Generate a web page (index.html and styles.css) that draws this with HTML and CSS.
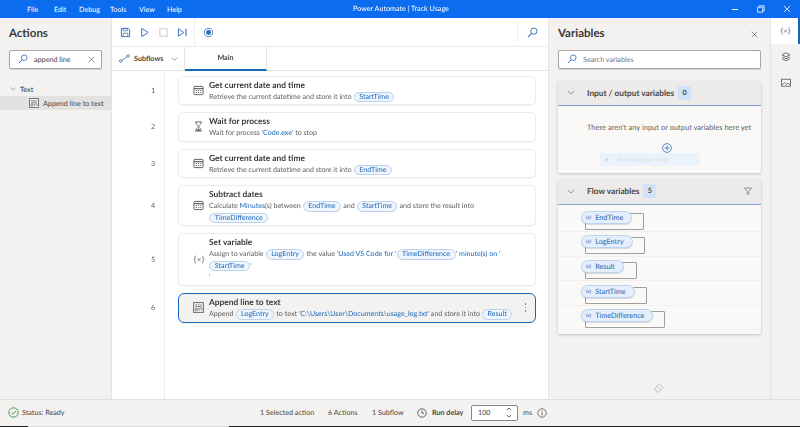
FILE: index.html
```html
<!DOCTYPE html>
<html lang="en">
<head>
<meta charset="utf-8">
<title>Power Automate | Track Usage</title>
<link rel="stylesheet" href="styles.css">
</head>
<body>
<svg class="defs" width="0" height="0">
  <defs>
    <symbol id="i-search" viewBox="0 0 12 12"><circle cx="7.5" cy="4.5" r="3.4" fill="none" stroke="currentColor"/><path d="M5 7 1 11" stroke="currentColor" stroke-width="1.1"/></symbol>
    <symbol id="i-close" viewBox="0 0 10 10"><path d="M1 1l8 8M9 1 1 9" stroke="currentColor" stroke-width=".9"/></symbol>
    <symbol id="i-chev" viewBox="0 0 10 6"><path d="M.8.8 5 5 9.2.8" fill="none" stroke="currentColor" stroke-width=".9"/></symbol>
    <symbol id="i-cal" viewBox="0 0 12 12"><rect x="1" y="1.5" width="10" height="9" rx="1" fill="none" stroke="currentColor"/><path d="M1 4h10" stroke="currentColor" stroke-width="1.2"/><path d="M3 6h1.4M5.4 6h1.4M7.8 6h1.4M3 8.2h1.4M5.4 8.2h1.4M7.8 8.2h1.4" stroke="currentColor" stroke-width=".9"/></symbol>
    <symbol id="i-text" viewBox="0 0 12 12"><rect x=".7" y=".7" width="10.6" height="10.6" fill="#eee" stroke="currentColor" stroke-width=".9"/><path d="M2.5 3.2h2M5.5 3.2h1.5M8 3.2h1.5M2.5 5h7" stroke="currentColor" stroke-width=".8"/><path d="M2.5 7h2.2v2.4h-2.2zM5.6 7h1.2v2.4M7.8 7h1.8v2.4" fill="none" stroke="currentColor" stroke-width=".7"/></symbol>
    <symbol id="i-x" viewBox="0 0 14 10"><path d="M3.5.8C2 .8 2.4 1.6 2.4 3.4 2.4 4.5 1.6 5 1 5c.6 0 1.4.5 1.4 1.6 0 1.8-.4 2.6 1.1 2.6M10.5.8c1.5 0 1.1.8 1.1 2.6 0 1.1.8 1.6 1.4 1.6-.6 0-1.4.5-1.4 1.6 0 1.8.4 2.6-1.1 2.6" fill="none" stroke="currentColor" stroke-width=".8"/><path d="M5.2 3.4 8.8 7M8.8 3.4 5.2 7" stroke="currentColor" stroke-width=".8"/></symbol>
  </defs>
</svg>

<div class="app">
  <header class="titlebar">
    <nav class="menu">
      <span class="m-file">File</span><span class="m-edit">Edit</span><span class="m-debug">Debug</span><span class="m-tools">Tools</span><span class="m-view">View</span><span class="m-help">Help</span>
    </nav>
    <div class="apptitle">Power Automate | Track Usage</div>
    <div class="winbtns">
      <svg width="8" height="8" viewBox="0 0 8 8"><path d="M1 4.5h6" stroke="#fff"/></svg>
      <svg width="8" height="8" viewBox="0 0 8 8"><path d="M.7 2.2h5v5h-5zM2.2 2V.8h5v5H5.900" fill="none" stroke="#fff" stroke-width=".8"/></svg>
      <svg width="8" height="8" viewBox="0 0 10 10"><path d="M1 1l8 8M9 1 1 9" stroke="#fff"/></svg>
    </div>
  </header>

  <div class="main">
    <aside class="actions">
      <h2 class="panel-title">Actions</h2>
      <div class="search search-actions">
        <svg class="s-ico"><use href="#i-search"/></svg>
        <span class="s-text">append line</span>
        <svg class="s-x"><use href="#i-close"/></svg>
      </div>
      <div class="tree-head"><svg class="tree-chev"><use href="#i-chev"/></svg><span>Text</span></div>
      <div class="tree-item"><svg class="tree-ico"><use href="#i-text"/></svg><span>Append line to text</span></div>
    </aside>

    <section class="center">
      <div class="toolbar">
        <div class="tool-group">
          <svg class="tool" viewBox="0 0 12 12"><path d="M1.500 1.500h7.500l1.500 1.500v7.500h-9z" fill="none" stroke="#2f6fb5"/><path d="M3.500 1.700h4.500v2.500h-4.500zM3.500 10.300v-3.500h5v3.500" fill="none" stroke="#2f6fb5" stroke-width=".8"/></svg>
          <svg class="tool" viewBox="0 0 12 12"><path d="M3 1.500v9l7-4.500z" fill="none" stroke="#2f6fb5"/></svg>
          <svg class="tool" viewBox="0 0 12 12"><rect x="2" y="2" width="8" height="8" fill="none" stroke="#c8c6c4"/></svg>
          <svg class="tool" viewBox="0 0 12 12"><path d="M1.500 2v8l6-4z" fill="none" stroke="#2f6fb5"/><path d="M9.800 2v8" stroke="#2f6fb5" stroke-width="1.200"/></svg>
        </div>
        <div class="tool-group rec">
          <svg class="tool" viewBox="0 0 12 12"><circle cx="6" cy="6" r="4.600" fill="none" stroke="#2f6fb5" stroke-width=".9"/><circle cx="6" cy="6" r="2.700" fill="#2f6fb5"/></svg>
        </div>
        <div class="tool-end"><svg class="tool-search"><use href="#i-search"/></svg></div>
      </div>

      <div class="tabs">
        <div class="subflows">
          <svg width="11" height="9" viewBox="0 0 11 9"><circle cx="1.800" cy="7" r="1.300" fill="none" stroke="#2f6fb5" stroke-width=".8"/><circle cx="9.200" cy="2" r="1.300" fill="none" stroke="#2f6fb5" stroke-width=".8"/><path d="M3 6.300 8 2.700" stroke="#2f6fb5" stroke-width=".8"/></svg>
          <span>Subflows</span>
          <svg class="sub-chev"><use href="#i-chev"/></svg>
        </div>
        <div class="tab-main">Main</div>
      </div>

      <div class="flow">
        <div class="gutter"></div>
        <ol class="steps">
          <li class="step h1"><span class="num">1</span><div class="card">
            <svg class="c-ico"><use href="#i-cal"/></svg>
            <div class="c-body"><div class="c-title">Get current date and time</div><div class="c-desc">Retrieve the current datetime and store it into <span class="pill">StartTime</span></div></div>
          </div></li>
          <li class="step h1"><span class="num">2</span><div class="card">
            <svg class="c-ico" viewBox="0 0 12 12"><path d="M2.500 1h7M2.500 11h7M3.300 1v1.500c0 1.800 2.700 2.200 2.700 3.500s-2.700 1.700-2.700 3.500v1.500M8.700 1v1.500c0 1.800-2.700 2.200-2.700 3.500s2.700 1.700 2.700 3.500v1.500" fill="none" stroke="#555" stroke-width=".9"/><path d="M3.800 10.500 6 8l2.200 2.500z" fill="#555"/></svg>
            <div class="c-body"><div class="c-title">Wait for process</div><div class="c-desc">Wait for process <span class="lit">'Code.exe'</span> to stop</div></div>
          </div></li>
          <li class="step h1"><span class="num">3</span><div class="card">
            <svg class="c-ico"><use href="#i-cal"/></svg>
            <div class="c-body"><div class="c-title">Get current date and time</div><div class="c-desc">Retrieve the current datetime and store it into <span class="pill">EndTime</span></div></div>
          </div></li>
          <li class="step h2"><span class="num">4</span><div class="card">
            <svg class="c-ico"><use href="#i-cal"/></svg>
            <div class="c-body"><div class="c-title">Subtract dates</div><div class="c-desc">Calculate <span class="lit">Minutes</span>(s) between <span class="pill">EndTime</span> and <span class="pill">StartTime</span> and store the result into<br><span class="pill">TimeDifference</span></div></div>
          </div></li>
          <li class="step h3"><span class="num">5</span><div class="card">
            <svg class="c-ico c-ico-x"><use href="#i-x"/></svg>
            <div class="c-body"><div class="c-title">Set variable</div><div class="c-desc">Assign to variable <span class="pill">LogEntry</span> the value <span class="lit">'Used VS Code for '</span><span class="pill">TimeDifference</span><span class="lit">' minute(s) on '</span><br><span class="pill">StartTime</span><span class="lit">'</span><br><span class="lit">'</span></div></div>
          </div></li>
          <li class="step h1"><span class="num">6</span><div class="card selected">
            <svg class="c-ico"><use href="#i-text"/></svg>
            <div class="c-body"><div class="c-title">Append line to text</div><div class="c-desc">Append <span class="pill">LogEntry</span> to text <span class="lit">'C:\Users\User\Documents\usage_log.txt'</span> and store it into <span class="pill">Result</span></div></div>
            <div class="kebab"><i></i><i></i><i></i></div>
          </div></li>
        </ol>
      </div>
    </section>

    <aside class="variables">
      <div class="var-head">
        <h2 class="panel-title">Variables</h2>
        <svg class="var-close"><use href="#i-close"/></svg>
      </div>
      <div class="search search-vars">
        <svg class="s-ico"><use href="#i-search"/></svg>
        <span class="s-place">Search variables</span>
      </div>

      <div class="vcard">
        <div class="vcard-head">
          <svg class="v-chev"><use href="#i-chev"/></svg>
          <span class="v-name">Input / output variables</span><span class="badge">0</span>
        </div>
        <div class="vcard-empty">
          <p>There aren't any input or output variables here yet</p>
          <svg class="plus" width="10" height="10" viewBox="0 0 10 10"><circle cx="5" cy="5" r="4.400" fill="none" stroke="#2f6fb5" stroke-width=".8"/><path d="M5 2.600v4.800M2.600 5h4.800" stroke="#2f6fb5" stroke-width=".8"/></svg>
          <div class="snip"><i></i><span>Rectangular Snip</span></div>
        </div>
      </div>

      <div class="vcard">
        <div class="vcard-head">
          <svg class="v-chev"><use href="#i-chev"/></svg>
          <span class="v-name">Flow variables</span><span class="badge">5</span>
          <svg class="filter" width="8" height="8" viewBox="0 0 8 8"><path d="M.5 1h7L4.800 4.300v3L3.200 6.500V4.300z" fill="none" stroke="#555" stroke-width=".6"/></svg>
        </div>
        <div class="var-list">
          <div class="var-row"><div class="vpill w1"><span class="vx">(x)</span>EndTime</div></div>
          <div class="var-row"><div class="vpill w2"><span class="vx">(x)</span>LogEntry</div></div>
          <div class="var-row"><div class="vpill w3"><span class="vx">(x)</span>Result</div></div>
          <div class="var-row"><div class="vpill w4"><span class="vx">(x)</span>StartTime</div></div>
          <div class="var-row"><div class="vpill w5"><span class="vx">(x)</span>TimeDifference</div></div>
        </div>
      </div>

      <div class="eraser">
        <svg width="10" height="10" viewBox="0 0 10 10"><path d="M.8 5.500 5.500.8 9.200 4.500 4.500 9.200H3.300z" fill="none" stroke="#b5b3b1" stroke-width=".8"/><path d="M3 3.300 6.800 7" stroke="#b5b3b1" stroke-width=".7"/></svg>
      </div>
    </aside>

    <nav class="rail">
      <div class="rail-item active"><svg class="rail-x"><use href="#i-x"/></svg></div>
      <div class="rail-item"><svg width="10" height="10" viewBox="0 0 10 10"><path d="M5 .8 9 2.800 5 4.800 1 2.800zM1 4.800 5 6.800 9 4.800M1 6.800 5 8.800 9 6.800" fill="none" stroke="#555" stroke-width=".8"/></svg></div>
      <div class="rail-item"><svg width="10" height="10" viewBox="0 0 10 10"><rect x=".6" y="1.200" width="8.800" height="7" fill="none" stroke="#555" stroke-width=".8"/><path d="M1 7 3.500 4.500 5.800 7M5.800 6 7 5l2 2" fill="none" stroke="#555" stroke-width=".7"/></svg></div>
    </nav>
  </div>

  <footer class="status">
    <div class="st-left">
      <svg width="11" height="11" viewBox="0 0 11 11"><circle cx="5.500" cy="5.500" r="4.700" fill="none" stroke="#4a9a4a"/><path d="M3.200 5.600 4.900 7.200 7.900 4" fill="none" stroke="#4a9a4a" stroke-width=".9"/></svg>
      <span>Status: Ready</span>
    </div>
    <div class="st-mid">
      <span class="st-sel">1 Selected action</span>
      <span class="st-act">6 Actions</span>
      <span class="st-sub">1 Subflow</span>
      <svg class="st-clock" width="10" height="10" viewBox="0 0 10 10"><circle cx="5" cy="5" r="4.200" fill="none" stroke="#444" stroke-width=".8"/><path d="M5 2.500V5.200H7" fill="none" stroke="#444" stroke-width=".8"/></svg>
      <b class="st-delay">Run delay</b>
      <div class="delay-box"><span>100</span><svg width="6" height="11" viewBox="0 0 6 11"><path d="M.8 3 3 1 5.200 3M.8 8 3 10 5.200 8" fill="none" stroke="#444" stroke-width=".8"/></svg></div>
      <span class="st-ms">ms</span>
      <svg width="10" height="10" viewBox="0 0 10 10"><circle cx="5" cy="5" r="4.200" fill="none" stroke="#444" stroke-width=".7"/><path d="M5 4.300v3M5 2.500v1" stroke="#444" stroke-width=".8"/></svg>
    </div>
  </footer>
  <div class="taskbar"><i class="tb-a"></i><i class="tb-b"></i><i class="tb-c"></i></div>
</div>
</body>
</html>
```
FILE: styles.css
```css
* { box-sizing: border-box; }
html, body { margin: 0; padding: 0; }
body { width: 800px; height: 427px; overflow: hidden; font-family: Lato, "Open Sans", sans-serif; color: #323130; background: #f3f2f1; font-size: 7px; text-rendering: geometricPrecision; }
.defs { position: absolute; }
.app { display: flex; flex-direction: column; height: 427px; filter: blur(0.25px); }

.titlebar { height: 18px; flex: none; background: #0b6cf0; color: #fff; display: flex; align-items: center; position: relative; font-size: 7.200px; }
.menu { display: flex; padding-left: 27px; }
.m-file { width: 27px; } .m-edit { width: 25px; } .m-debug { width: 31px; } .m-tools { width: 29px; } .m-view { width: 28px; }
.apptitle { position: absolute; left: 353px; top: 0; line-height: 18px; white-space: nowrap; }
.winbtns { margin-left: auto; display: flex; gap: 18px; padding-right: 9px; align-items: center; }

.main { flex: 1; display: flex; min-height: 0; }

.actions { width: 112px; flex: none; background: #f3f2f1; padding-top: 8px; border-right: 1px solid #e6e4e2; }
.panel-title { margin: 0 0 0 9px; font-size: 11.500px; line-height: 16px; font-weight: 700; color: #3b3a39; }
.search { height: 18.500px; background: #fff; border: 1px solid #a9a7a5; border-radius: 2px; display: flex; align-items: center; box-shadow: 0 1px 1px #0002; }
.search-actions { width: 93px; margin: 8px 0 0 9px; }
.s-ico { width: 10px; height: 10px; color: #2f6fb5; margin-left: 8px; flex: none; }
.s-text { margin-left: 6px; font-size: 7.200px; color: #484644; }
.s-x { width: 7px; height: 7px; color: #555; margin-left: auto; margin-right: 6px; }
.s-place { margin-left: 6px; font-size: 7.200px; color: #77757a; }
.tree-head { display: flex; align-items: center; height: 14px; margin-top: 13.500px; padding-left: 10px; font-size: 7.200px; }
.tree-chev { width: 6px; height: 4px; color: #666; margin-right: 4px; }
.tree-item { display: flex; align-items: center; height: 14px; padding-left: 29px; background: #e4e2e0; font-size: 7.200px; color: #484644; }
.tree-ico { width: 10px; height: 10px; color: #555; margin-right: 4px; }

.center { width: 436px; flex: none; background: #fff; display: flex; flex-direction: column; min-height: 0; }
.toolbar { height: 29px; flex: none; display: flex; align-items: center; border-bottom: 1px solid #edebe9; padding-left: 8px; }
.tool-group { display: flex; gap: 8px; height: 100%; align-items: center; padding: 0 6px 0 0; border-right: 1px solid #f0efee; }
.tool { width: 11px; height: 11px; flex: none; }
.rec { border-right: 0; padding-left: 8px; }
.tool-end { margin-left: auto; margin-right: 10px; border-left: 1px solid #edebe9; height: 18px; padding-left: 9px; display: flex; align-items: center; }
.tool-search { width: 11px; height: 11px; color: #2f6fb5; }

.tabs { height: 24px; flex: none; display: flex; border-bottom: 1px solid #e6e4e2; }
.subflows { width: 73px; display: flex; align-items: center; padding-left: 7px; gap: 4px; font-size: 7.200px; font-weight: 700; color: #484644; border-right: 1px solid #e6e4e2; }
.sub-chev { width: 7px; height: 4px; color: #555; margin-left: 4px; }
.tab-main { width: 82px; text-align: center; line-height: 22px; font-size: 7.200px; font-weight: 700; color: #484644; border-bottom: 2px solid #1668b8; border-right: 1px solid #e6e4e2; height: 24px; }

.flow { flex: 1; display: flex; min-height: 0; position: relative; }
.gutter { position: absolute; left: 52px; top: 0; bottom: 0; border-left: 1px solid #edebe9; }
.steps { list-style: none; margin: 0; padding: 4.500px 0 0 0; width: 100%; display: flex; flex-direction: column; gap: 7px; }
.step { display: flex; align-items: center; }
.h1 { height: 29.500px; } .h2 { height: 41px; } .h3 { height: 53px; }
.num { width: 66px; flex: none; padding-left: 39px; text-align: left; font-size: 7.200px; color: #605e5c; }
.card { width: 358px; height: 100%; background: #fff; border: 1px solid #edebe9; border-radius: 5px; display: flex; position: relative; padding: 3px 0 0 25px; box-shadow: 0 1px 1px #0000000a; }
.c-ico { position: absolute; left: 14px; top: 50%; margin-top: -5.500px; width: 11px; height: 11px; color: #555; }
.c-ico-x { width: 12px; height: 9px; margin-top: -4.500px; left: 14px; }
.c-body { padding-left: 5px; min-width: 0; }
.c-title { font-size: 8.400px; line-height: 11px; font-weight: 700; color: #3b3a39; white-space: nowrap; }
.c-desc { font-size: 7.100px; line-height: 11.500px; color: #605e5c; white-space: nowrap; }
.lit { color: #1a66b8; }
.pill { display: inline-block; height: 10.500px; line-height: 8.500px; padding: 0 4.500px; margin: 0 .3px; color: #1a66b8; background: #eff5fc; border: 1px solid #bcd3ee; border-radius: 5.500px; }
.selected { background: #f3f2f1; border: 1.500px solid #1668b8; border-radius: 6px; }
.kebab { position: absolute; right: 9px; top: 9px; display: flex; flex-direction: column; gap: 2px; }
.kebab i { display: block; width: 1.500px; height: 1.500px; background: #777; border-radius: 50%; }

.variables { width: 223px; flex: none; background: #f3f2f1; border-left: 1px solid #e6e4e2; border-right: 1px solid #e6e4e2; padding: 8px 9px 0 9px; display: flex; flex-direction: column; position: relative; }
.var-head { display: flex; align-items: center; justify-content: space-between; }
.var-head .panel-title { margin-left: 0; }
.var-close { width: 7px; height: 7px; color: #555; margin-right: 3px; }
.search-vars { margin-top: 8px; margin-bottom: 12px; flex: none; }
.vcard { background: #faf9f8; box-shadow: 0 1px 3px #0003; margin-bottom: 6px; border-radius: 2px; isolation: isolate; }
.vcard-head { height: 25.500px; background: #edebe9; border-bottom: 1px solid #7fa3d1; display: flex; align-items: center; padding-left: 9px; font-size: 8.300px; font-weight: 700; color: #484644; }
.v-chev { width: 8px; height: 5px; color: #666; margin-right: 12px; flex: none; }
.v-name { white-space: nowrap; }
.badge { width: 13px; height: 14px; margin-left: 4px; background: #cfe2f8; text-align: center; line-height: 14px; font-size: 7.200px; }
.filter { margin-left: auto; margin-right: 9px; }
.vcard-empty { height: 67px; position: relative; text-align: center; padding-top: 16px; }
.vcard-empty p { margin: 0 0 0 29px; font-size: 7.500px; line-height: 11px; color: #605e5c; text-align: left; font-weight: 400; white-space: nowrap; }
.plus { position: absolute; left: 104px; top: 37px; }
.snip { position: absolute; left: 42px; top: 47px; width: 100px; height: 13px; background: #eaf2fb; display: flex; align-items: center; padding-left: 5px; gap: 9px; font-size: 7.200px; color: #dfe5ea; }
.snip i { width: 3px; height: 3px; border-radius: 50%; background: #cfd8e2; }
.var-list { padding: 3px 0 4px; }
.var-row { height: 24.600px; display: flex; align-items: center; padding: 0 0 4px 23px; border-bottom: 1px solid #f1f0ef; }
.vpill { position: relative; height: 13px; line-height: 11px; background: #e4effb; border: 1px solid #bcd3ee; border-radius: 6.500px; color: #2a62a8; font-size: 7.300px; padding-left: 4px; white-space: nowrap; box-shadow: 0 1px 1px #0002; }
.vpill::after { content: ""; position: absolute; z-index: -1; left: 3px; top: 1px; height: 15px; border: 1px solid #a09e9c; border-radius: 1px; }
.vx { font-size: 5px; margin-right: 4px; position: relative; top: -1px; }
.w1 { width: 51px; } .w1::after { width: 57px; }
.w2 { width: 52px; } .w2::after { width: 58px; }
.w3 { width: 43px; } .w3::after { width: 49.500px; }
.w4 { width: 54px; } .w4::after { width: 59.500px; }
.w5 { width: 71.500px; } .w5::after { width: 77.500px; }
.eraser { position: absolute; left: 105px; top: 365px; }

.rail { flex: 1; background: #f3f2f1; display: flex; flex-direction: column; }
.rail-item { height: 26px; display: flex; align-items: center; justify-content: center; }
.rail-item.active { background: #fff; border-right: 2px solid #1668b8; padding-left: 2px; }
.rail-x { width: 11px; height: 8px; color: #555; }

.status { height: 26.500px; flex: none; background: #f3f2f1; border-top: 1px solid #e1dfdd; display: flex; align-items: center; font-size: 7.200px; color: #484644; }
.st-left { display: flex; align-items: center; gap: 3px; padding-left: 8px; width: 260px; }
.st-mid { display: flex; align-items: center; }
.st-sel { width: 68px; } .st-act { width: 44px; } .st-sub { width: 45px; }
.st-clock { margin-right: 5px; }
.st-delay { font-weight: 700; width: 39px; white-space: nowrap; }
.delay-box { width: 47px; height: 16px; background: #fff; border: 1px solid #8a8886; border-radius: 2px; display: flex; align-items: center; justify-content: space-between; padding: 0 5px 0 6px; margin-right: 5px; }
.st-ms { margin-right: 5px; }
.taskbar { height: 1.500px; flex: none; display: flex; }
.tb-a { width: 28px; background: #222; }
.tb-b { width: 201px; background: #dcdbda; }
.tb-c { flex: 1; background: #222; }
```
